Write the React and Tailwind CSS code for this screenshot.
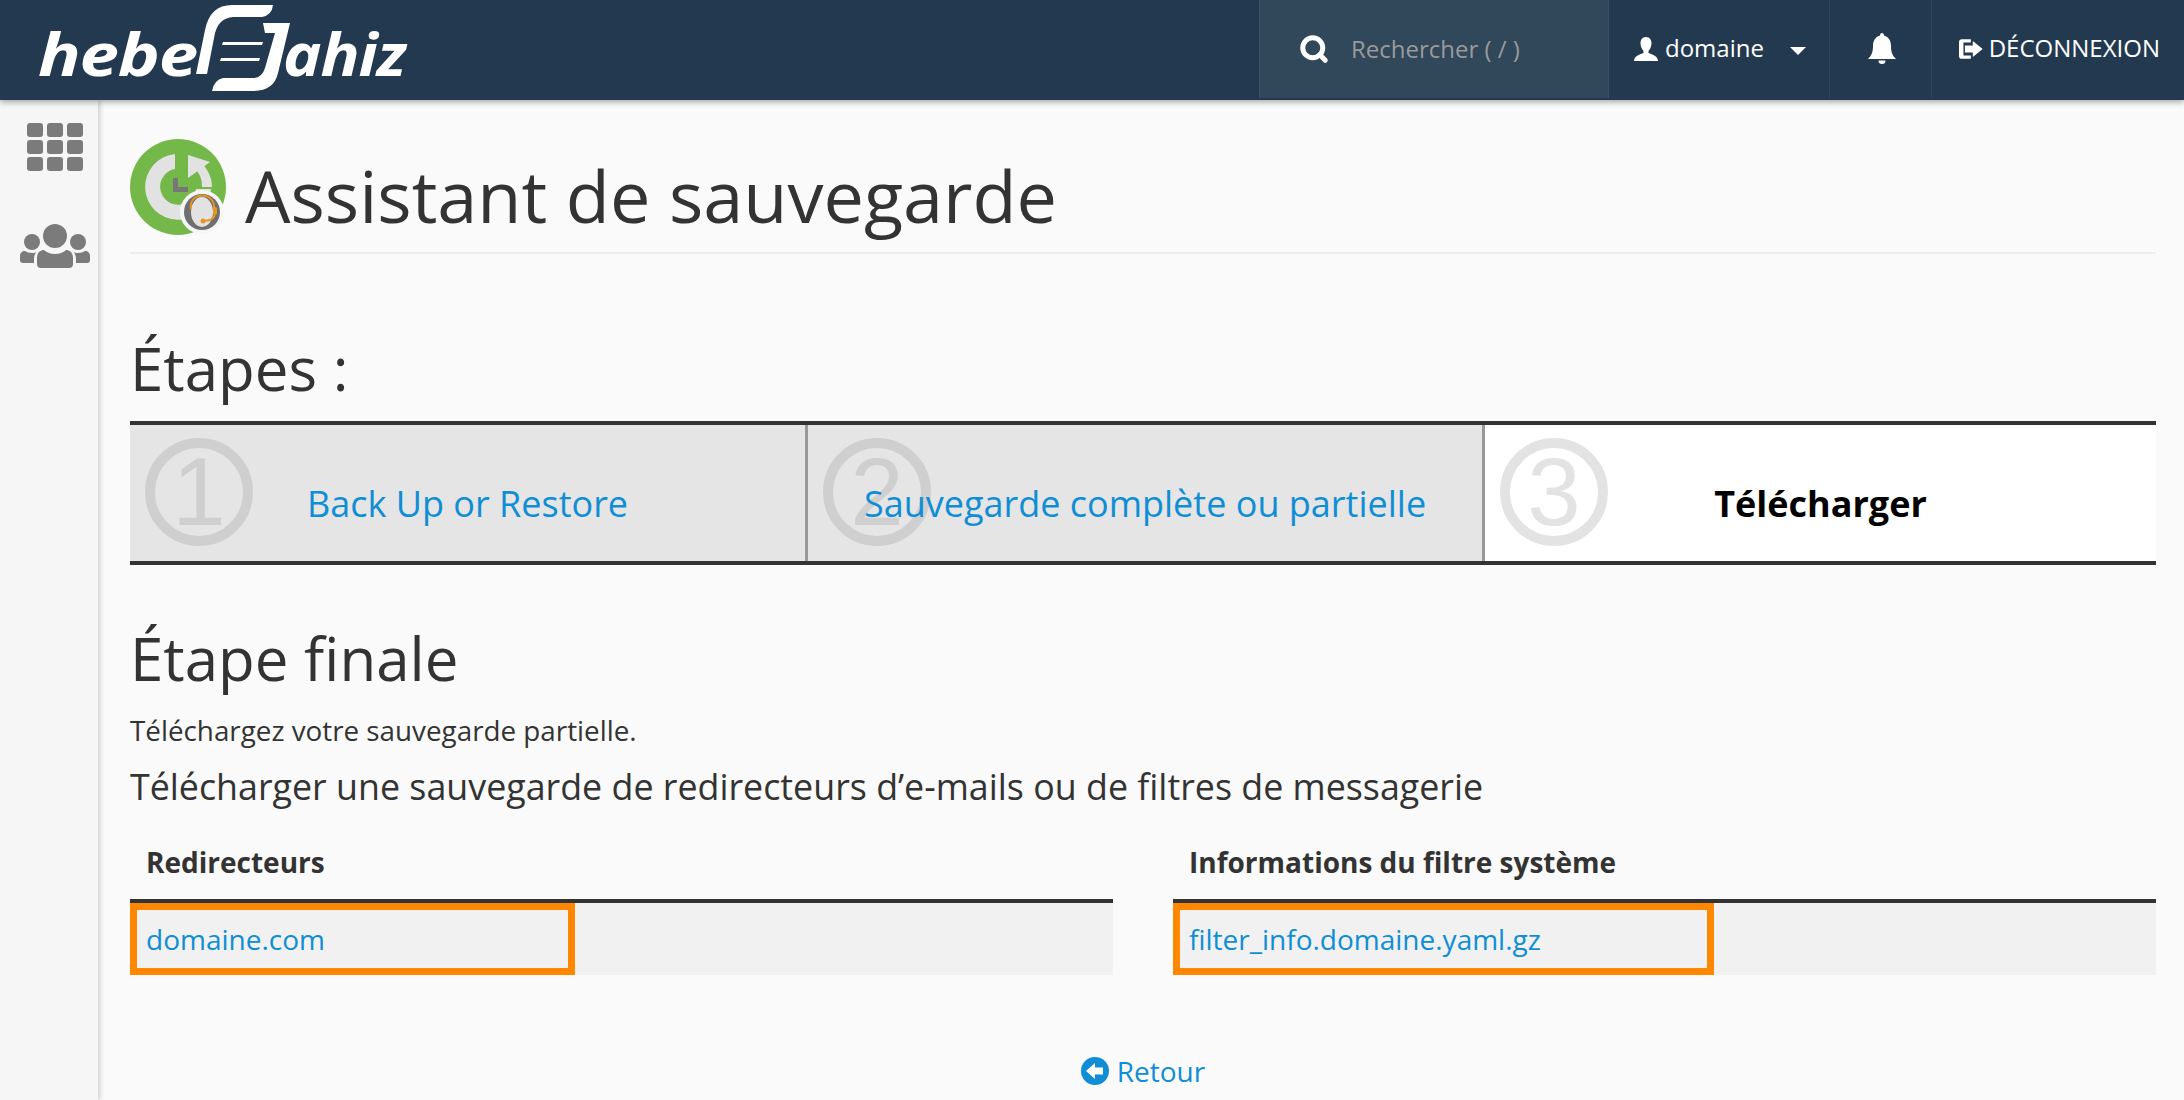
import { Search } from "lucide-react";

function Logo() {
  return (
    <div className="flex w-[420px] h-full items-center relative">
      <span className="absolute left-[38px] top-[18px] origin-left scale-x-[1.2] font-['Open_Sans',sans-serif] italic font-bold text-[59px] leading-[70px] tracking-[-1px] text-white">
        hebe
      </span>
      <svg width="420" height="100" viewBox="0 0 420 100" fill="white" className="absolute left-0 top-0">
        <path d="M196 74 L205 30 Q210 5 232 5 L273 5 Q272 15 262 17 L233 17 Q219 18 215 33 L207 74 Z" />
        <path d="M263 23 L290 23 L278 73 Q274 91 253 91 L212 91 Q214 80 223 78 L253 78 Q262 78 265 68 L275 33 L265 33 Q264 28 263 23 Z" />
        <path d="M223 42 H263 L262 45 H222 Z M221 58 H260 L259 61 H220 Z" />
      </svg>
      <span className="absolute left-[283px] top-[18px] origin-left scale-x-[1.1] font-['Open_Sans',sans-serif] italic font-bold text-[59px] leading-[70px] tracking-[-1px] text-white">
        ahiz
      </span>
    </div>
  );
}

function Header() {
  return (
    <header className="flex h-[100px] shrink-0 justify-between bg-[#23394f] text-white shadow-[0_2px_6px_rgba(0,0,0,0.35)] relative z-10">
      <Logo />
      <div className="flex h-[98px] text-[24px]">
        <div className="flex w-[350px] items-center bg-[#31475a] border-x border-[#3b5063] pl-[39px]">
          <Search size={30} strokeWidth={4} className="text-white" />
          <span className="ml-[22px] text-[#9a9a9a]">Rechercher ( / )</span>
        </div>
        <div className="flex w-[221px] items-center border-r border-[#2e4459] pl-[25px]">
          <svg width="24" height="24" viewBox="0 0 24 24" fill="white">
            <path d="M12 0c4 0 5.500 3 5.500 6.500 0 3-1.500 6-3 7.500v2c3 1.200 9.500 3 9.500 8H0c0-5 6.500-6.800 9.500-8v-2C8 12.500 6.500 9.500 6.500 6.500 6.500 3 8 0 12 0z" />
          </svg>
          <span className="ml-[7px] pb-[2px]">domaine</span>
          <svg width="16" height="8" viewBox="0 0 16 8" fill="white" className="ml-[26px] mt-[3px]">
            <path d="M0 0 H16 L8 8 Z" />
          </svg>
        </div>
        <div className="flex w-[102px] items-center justify-center border-r border-[#2e4459] pl-[2px]">
          <svg width="30" height="32" viewBox="0 0 30 32" fill="white">
            <path d="M15 0c1.300 0 2 1 2 2.500C22 4 24 8 24 13c0 7 2 10 5 13H1c3-3 5-6 5-13 0-5 2-9 7-10.500C13 1 13.700 0 15 0z" />
            <path d="M11.500 27.500h7a3.500 3.500 0 0 1-7 0z" />
          </svg>
        </div>
        <div className="flex w-[252px] items-center pl-[27px] pr-[24px]">
          <svg width="24" height="20" viewBox="0 0 24 20" fill="white">
            <path d="M3 0h9v3.500H4.500v13H12V20H3c-2 0-3-1.200-3-3V3c0-1.800 1-3 3-3z" />
            <path d="M6 6.500h8V2l10 8-10 8v-4.500H6z" />
          </svg>
          <span className="ml-[6px] pb-[2px]">DÉCONNEXION</span>
        </div>
      </div>
    </header>
  );
}

function Sidebar() {
  return (
    <aside className="flex w-[98px] shrink-0 flex-col items-center bg-[#f6f6f6] shadow-[2px_0_5px_rgba(0,0,0,0.18)] pt-[22px] pl-[12px]">
      <svg width="56" height="50" viewBox="0 0 56 50" fill="#7b7b7b">
        <rect x="0" y="1" width="16" height="14" rx="3" />
        <rect x="20" y="1" width="16" height="14" rx="3" />
        <rect x="40" y="1" width="16" height="14" rx="3" />
        <rect x="0" y="18" width="16" height="14" rx="3" />
        <rect x="20" y="18" width="16" height="14" rx="3" />
        <rect x="40" y="18" width="16" height="14" rx="3" />
        <rect x="0" y="35" width="16" height="14" rx="3" />
        <rect x="20" y="35" width="16" height="14" rx="3" />
        <rect x="40" y="35" width="16" height="14" rx="3" />
      </svg>
      <svg width="70" height="44" viewBox="0 0 70 44" fill="#7b7b7b" className="mt-[52px]">
        <circle cx="35" cy="12" r="12" />
        <circle cx="12" cy="18" r="8" />
        <circle cx="58" cy="18" r="8" />
        <path d="M24 26c2 2 6 4 11 4s9-2 11-4c4 0 7 3 7 8v6c0 3-2 4-4 4H21c-2 0-4-1-4-4v-6c0-5 3-8 7-8z" />
        <path d="M5 27c2 1 4 2 7 2 1 0 3 0 4-1-1 2-2 4-2 7v4H3c-2 0-3-1-3-3v-4c0-3 2-5 5-5z" />
        <path d="M65 27c-2 1-4 2-7 2-1 0-3 0-4-1 1 2 2 4 2 7v4h11c2 0 3-1 3-3v-4c0-3-2-5-5-5z" />
      </svg>
    </aside>
  );
}

function BackupIcon() {
  return (
    <svg width="96" height="96" viewBox="0 0 96 96" className="shrink-0 mt-[39px]">
      <circle cx="48" cy="48" r="48" fill="#74b84a" />
      <path d="M45 15 A33 33 0 1 0 81 50 H66 A18 18 0 1 1 45 30 Z" fill="#e2e2e2" />
      <path d="M66 20 A33 33 0 0 1 82 48 H72 A24 24 0 0 0 63 28 Z" fill="#e2e2e2" />
      <path d="M58 16 L80 23 L58 39 Z" fill="#e2e2e2" />
      <path d="M45.500 39 V50.500 H58" fill="none" stroke="#777" strokeWidth="5" />
      <circle cx="72" cy="73" r="22" fill="#f6f6f6" />
      <circle cx="72" cy="73" r="18" fill="#6f6f6f" />
      <ellipse cx="72" cy="73" rx="11" ry="15" fill="#e2e2e2" />
      <path d="M61 70 C58 52 86 52 84 70" fill="none" stroke="#e8961e" strokeWidth="2" />
      <path d="M85 75 C84 80 80 82 73 82" fill="none" stroke="#e8961e" strokeWidth="2" />
      <circle cx="73" cy="82" r="2.500" fill="#e8961e" />
      <rect x="83" y="68" width="4" height="8" rx="2" fill="#e8961e" />
    </svg>
  );
}

function Step({ n, label, active, className }) {
  return (
    <div
      className={`flex items-center justify-center h-full relative pt-[22px] ${
        active ? "bg-white" : "bg-[#e5e5e5] border-r-[3px] border-[#999]"
      } ${className}`}
    >
      <span
        className={`absolute left-[15px] top-[13px] flex h-[108px] w-[108px] items-center justify-center rounded-full border-[10px] text-[96px] leading-none font-['Liberation_Sans',sans-serif] ${
          active ? "border-[#e3e3e3] text-[#e3e3e3]" : "border-[#cfcfcf] text-[#cfcfcf]"
        }`}
      >
        {n}
      </span>
      {active ? (
        <span className="relative text-[36px] font-bold text-black">{label}</span>
      ) : (
        <a className="relative text-[36px] text-[#0f8ed6]">{label}</a>
      )}
    </div>
  );
}

function DownloadTable({ title, link, boxW }) {
  return (
    <div className="flex-1">
      <div className="h-[72px] border-b-4 border-[#333] pl-[16px] pt-[12px] text-[28px] font-bold leading-[38px] text-[#333]">
        {title}
      </div>
      <div className="h-[72px] bg-[#f1f1f1]">
        <div className={`flex h-full items-center border-[7px] border-[#ff8800] pl-[9px] text-[28px] text-[#0f8ed6] ${boxW}`}>
          {link}
        </div>
      </div>
    </div>
  );
}

export default function App() {
  return (
    <div className="flex h-screen flex-col overflow-hidden bg-[#fafafa] font-['Open_Sans',sans-serif] text-[#333]">
      <Header />
      <div className="flex flex-1 min-h-0">
        <Sidebar />
        <main className="flex-1 pl-[32px] pr-[28px]">
          <div className="flex h-[154px] border-b-2 border-[#eee] gap-[19px]">
            <BackupIcon />
            <h1 className="text-[72px] leading-none mt-[59px]">Assistant de sauvegarde</h1>
          </div>
          <h2 className="mt-[74px] text-[60px] leading-[80px]">Étapes :</h2>
          <div className="mt-[13px] flex h-[144px] border-y-4 border-[#333]">
            <Step n="1" label="Back Up or Restore" className="w-[678px]" />
            <Step n="2" label="Sauvegarde complète ou partielle" className="w-[677px]" />
            <Step n="3" label="Télécharger" active className="flex-1" />
          </div>
          <h2 className="mt-[53px] text-[60px] leading-[80px]">Étape finale</h2>
          <p className="text-[27.8px] leading-[36px] mt-[14px]">Téléchargez votre sauvegarde partielle.</p>
          <p className="text-[35.8px] leading-[50px] mt-[13px]">
            Télécharger une sauvegarde de redirecteurs d’e-mails ou de filtres de messagerie
          </p>
          <div className="mt-[20px] flex gap-[60px]">
            <DownloadTable title="Redirecteurs" link="domaine.com" boxW="w-[445px]" />
            <DownloadTable title="Informations du filtre système" link="filter_info.domaine.yaml.gz" boxW="w-[541px]" />
          </div>
          <div className="mt-[75px] flex items-center justify-center gap-[8px] text-[28px] text-[#0f8ed6]">
            <svg width="28" height="28" viewBox="0 0 28 28">
              <circle cx="14" cy="14" r="14" fill="#0f8ed6" />
              <path d="M5 14 L14 6 V10.500 H22 V17.500 H14 V22 Z" fill="white" />
            </svg>
            <a>Retour</a>
          </div>
        </main>
      </div>
    </div>
  );
}
